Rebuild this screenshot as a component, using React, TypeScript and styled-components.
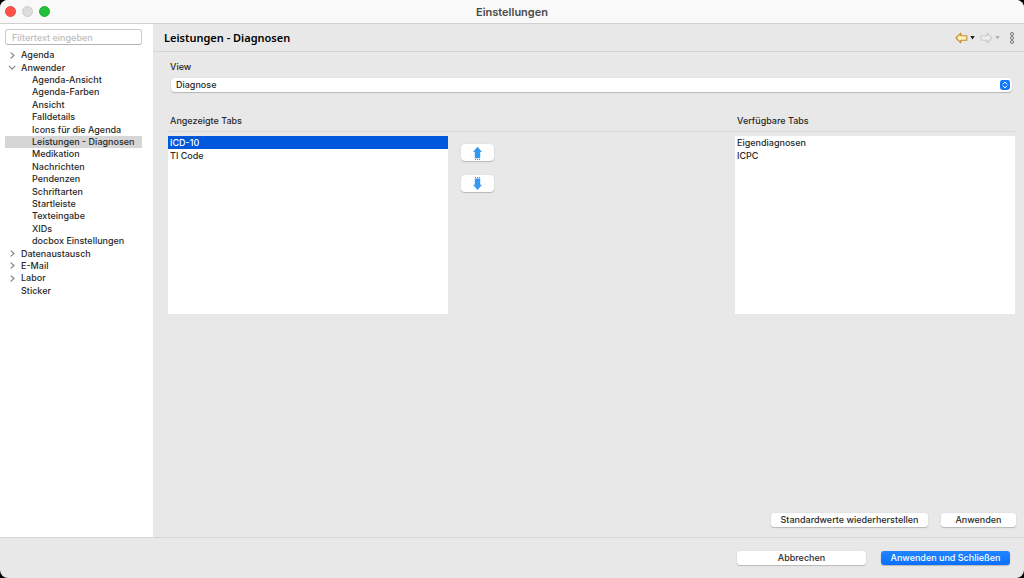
import React, { useState } from "react";
import styled, { createGlobalStyle, css } from "styled-components";

const GlobalStyle = createGlobalStyle`
  * { box-sizing: border-box; }
  body {
    margin: 0;
    background: #000;
    font: 500 9px/12px Inter, "Liberation Sans", sans-serif;
    color: #2a2a2a;
  }
  button, input, select { font: inherit; color: inherit; margin: 0; }
`;

const Window = styled.div`
  display: flex;
  flex-direction: column;
  min-height: 100vh;
  background: #e8e8e8;
  border-radius: 8px;
  overflow: hidden;
`;

const TitleBar = styled.header`
  display: grid;
  grid-template-columns: 1fr auto 1fr;
  align-items: center;
  height: 24px;
  padding: 0 5px;
  background: #f9f9f9;
  border-bottom: 1px solid #cfcfcf;
`;

const TrafficLights = styled.div`
  display: flex;
  gap: 6px;
`;

const Light = styled.button<{ $fill: string; $edge: string }>`
  width: 11px;
  height: 11px;
  padding: 0;
  border: 1px solid ${(p) => p.$edge};
  border-radius: 50%;
  background: ${(p) => p.$fill};
`;

const WindowTitle = styled.h1`
  margin: 0;
  font-size: 11px;
  line-height: 14px;
  font-weight: 600;
  color: #4a4a4a;
`;

const Body = styled.div`
  display: flex;
  flex: 1;
`;

const Sidebar = styled.nav`
  width: 153px;
  padding: 5px 11px 0 5px;
  background: #fff;
`;

const FilterInput = styled.input`
  display: block;
  width: 100%;
  height: 16px;
  padding: 0 6px;
  border: 1px solid #cbcbcb;
  border-bottom-color: #b4b4b4;
  border-radius: 3px;
  background: #fff;
  &::placeholder { color: #bdbdbd; opacity: 1; }
`;

const Tree = styled.ul`
  display: grid;
  grid-template-rows: repeat(20, 1fr);
  height: 248px;
  margin: 4px 0 0;
  padding: 0;
  list-style: none;
`;

const TreeItem = styled.li<{ $level: number; $selected: boolean }>`
  display: flex;
  align-items: center;
  padding-left: ${(p) => (p.$level === 2 ? 11 : 0)}px;
  white-space: nowrap;
  background: ${(p) => (p.$selected ? "#d6d6d6" : "transparent")};
`;

const Twisty = styled.span`
  display: flex;
  width: 16px;
  padding-left: 3px;
`;

const Main = styled.main`
  display: flex;
  flex-direction: column;
  flex: 1;
  min-width: 0;
`;

const PageHeader = styled.div`
  display: flex;
  align-items: center;
  justify-content: space-between;
  height: 28px;
  padding: 0 8px 0 11px;
  border-bottom: 1px solid #d4d4d4;
`;

const PageTitle = styled.h2`
  margin: 0;
  font: 600 11px/14px "Noto Sans", "Open Sans", sans-serif;
  color: #000;
`;

const HeaderTools = styled.div`
  display: flex;
  align-items: center;
`;

const ToolButton = styled.button<{ $gap?: number }>`
  display: flex;
  padding: 0;
  margin-right: ${(p) => p.$gap ?? 0}px;
  border: 0;
  background: none;
`;

const Content = styled.div`
  display: flex;
  flex-direction: column;
  flex: 1;
  padding: 9px 8px 9px 15px;
`;

const FieldLabel = styled.label`
  padding-left: 2px;
`;

const SelectFrame = styled.div`
  display: grid;
  align-items: center;
  margin: 5px 4px 0 3px;
  border-radius: 4px;
  background: #fff;
  box-shadow: 0 1px 1px #b4b4b4, 0 0 1px #c4c4c4;
`;

const Select = styled.select`
  grid-area: 1 / 1;
  width: 100%;
  height: 14px;
  padding: 0 20px 0 5px;
  border: 0;
  border-radius: 4px;
  background: transparent;
  appearance: none;
`;

const SelectKnob = styled.span`
  grid-area: 1 / 1;
  justify-self: end;
  display: flex;
  margin-right: 2px;
  pointer-events: none;
`;

const Columns = styled.div`
  display: grid;
  grid-template-columns: 280px 1fr 280px;
  margin-top: 23px;
  padding-right: 1px;
`;

const ColumnTitle = styled.h3<{ $span?: number }>`
  grid-column: span ${(p) => p.$span ?? 1};
  height: 17px;
  margin: 0 0 4px;
  padding-left: 2px;
  border-bottom: 1px solid #d6d6d6;
  font-size: 9px;
  line-height: 12px;
  font-weight: 500;
`;

const ListBox = styled.ul`
  height: 178px;
  margin: 0;
  padding: 0;
  list-style: none;
  background: #fff;
`;

const ListItem = styled.li<{ $selected?: boolean }>`
  padding-left: 2px;
  line-height: 13px;
  ${(p) => p.$selected && css`
    background: #0058dc;
    color: #fff;
  `}
`;

const MoveButtons = styled.div`
  display: flex;
  flex-direction: column;
  gap: 14px;
  padding: 8px 13px;
`;

const Button = styled.button<{ $width: number; $primary?: boolean; $tall?: boolean }>`
  display: flex;
  align-items: center;
  justify-content: center;
  width: ${(p) => p.$width}px;
  height: ${(p) => (p.$tall ? 17 : 14)}px;
  padding: 0;
  border: 0;
  border-radius: ${(p) => (p.$tall ? 4 : 3)}px;
  white-space: nowrap;
  background: ${(p) => (p.$primary ? "linear-gradient(#2385ff, #0a70fb)" : "#fff")};
  color: ${(p) => (p.$primary ? "#fff" : "#2a2a2a")};
  box-shadow: 0 1px 1px #b8b8b8, 0 0 1px #c4c4c4;
`;

const PageActions = styled.div`
  display: flex;
  justify-content: flex-end;
  gap: 13px;
  margin-top: auto;
  padding-bottom: 1px;
`;

const Footer = styled.footer`
  display: flex;
  justify-content: flex-end;
  gap: 15px;
  height: 41px;
  padding: 13px 14px 0;
  border-top: 1px solid #d6d6d6;
`;

type Node = { label: string; level: number; open?: boolean };

const nodes: Node[] = [
  { label: "Agenda", level: 1, open: false },
  { label: "Anwender", level: 1, open: true },
  { label: "Agenda-Ansicht", level: 2 },
  { label: "Agenda-Farben", level: 2 },
  { label: "Ansicht", level: 2 },
  { label: "Falldetails", level: 2 },
  { label: "Icons für die Agenda", level: 2 },
  { label: "Leistungen - Diagnosen", level: 2 },
  { label: "Medikation", level: 2 },
  { label: "Nachrichten", level: 2 },
  { label: "Pendenzen", level: 2 },
  { label: "Schriftarten", level: 2 },
  { label: "Startleiste", level: 2 },
  { label: "Texteingabe", level: 2 },
  { label: "XIDs", level: 2 },
  { label: "docbox Einstellungen", level: 2 },
  { label: "Datenaustausch", level: 1, open: false },
  { label: "E-Mail", level: 1, open: false },
  { label: "Labor", level: 1, open: false },
  { label: "Sticker", level: 1 },
];

const Chevron = ({ open }: { open: boolean }) => (
  <svg width="9" height="9" viewBox="0 0 9 9" fill="none" stroke="#808080" strokeWidth="1.1" strokeLinecap="round" strokeLinejoin="round">
    <path d={open ? "M1.2 3.2 4.1 6.1 7 3.2" : "M3 1.8 6 4.5 3 7.2"} />
  </svg>
);

const HistoryArrow = ({ forward }: { forward?: boolean }) => (
  <svg width="13" height="12" viewBox="0 0 13 12" strokeLinejoin="round">
    <path
      d={forward ? "M12 6 7.2 1.2V3.8H1.2V8.2H7.2V10.8Z" : "M1 6 5.8 1.2V3.8H11.8V8.2H5.8V10.8Z"}
      fill={forward ? "#ededed" : "#fff3bd"}
      stroke={forward ? "#cacaca" : "#c48a2c"}
      strokeWidth="1.1"
    />
  </svg>
);

const Caret = ({ color }: { color: string }) => (
  <svg width="5" height="5" viewBox="0 0 5 5">
    <path d="M.3 1h4.4L2.5 4.5Z" fill={color} />
  </svg>
);

const MenuDots = () => (
  <svg width="8" height="12" viewBox="0 0 8 12" fill="#f2f2f2" stroke="#666" strokeWidth=".9">
    <circle cx="4" cy="2" r="1.5" />
    <circle cx="4" cy="6" r="1.5" />
    <circle cx="4" cy="10" r="1.5" />
  </svg>
);

const Knob = () => (
  <svg width="10" height="10" viewBox="0 0 10 10" fill="none">
    <rect width="10" height="10" rx="2.4" fill="#1478fb" />
    <path d="M3 4 5 2.1 7 4M3 6 5 7.9 7 6" stroke="#fff" strokeWidth="1" strokeLinecap="round" strokeLinejoin="round" />
  </svg>
);

const MoveArrow = ({ down }: { down?: boolean }) => (
  <svg width="10" height="14" viewBox="0 0 10 14" fill="#3399f3">
    {down ? (
      <path d="M2 0h1v1h-1zM4 0h1v1h-1zM6 0h1v1h-1zM1.8 1.6h5.4v6.2H9L4.5 13 0 7.8H1.8Z" />
    ) : (
      <path d="M4.5 .8 9 6H7.2V12.2H1.8V6H0ZM2 13h1v1h-1zM4 13h1v1h-1zM6 13h1v1h-1z" />
    )}
  </svg>
);

export default function App() {
  const [selected, setSelected] = useState("Leistungen - Diagnosen");

  return (
    <>
      <GlobalStyle />
      <Window>
        <TitleBar>
          <TrafficLights>
            <Light $fill="#ff5049" $edge="#ea4a43" aria-label="Schließen" />
            <Light $fill="#dcdcdc" $edge="#cccccc" aria-label="Minimieren" />
            <Light $fill="#23c138" $edge="#1fb133" aria-label="Vergrößern" />
          </TrafficLights>
          <WindowTitle>Einstellungen</WindowTitle>
        </TitleBar>
        <Body>
          <Sidebar>
            <FilterInput type="text" placeholder="Filtertext eingeben" aria-label="Filtertext eingeben" />
            <Tree role="tree">
              {nodes.map((n) => (
                <TreeItem
                  key={n.label}
                  role="treeitem"
                  aria-level={n.level}
                  aria-expanded={n.open}
                  aria-selected={n.label === selected}
                  $level={n.level}
                  $selected={n.label === selected}
                  onClick={() => setSelected(n.label)}
                >
                  <Twisty>{n.open !== undefined && <Chevron open={n.open} />}</Twisty>
                  {n.label}
                </TreeItem>
              ))}
            </Tree>
          </Sidebar>
          <Main>
            <PageHeader>
              <PageTitle>Leistungen - Diagnosen</PageTitle>
              <HeaderTools>
                <ToolButton aria-label="Zurück" $gap={2}><HistoryArrow /></ToolButton>
                <ToolButton aria-label="Verlauf zurück" $gap={5}><Caret color="#1a1a1a" /></ToolButton>
                <ToolButton aria-label="Vor" $gap={2} disabled><HistoryArrow forward /></ToolButton>
                <ToolButton aria-label="Verlauf vor" $gap={8} disabled><Caret color="#b0b0b0" /></ToolButton>
                <ToolButton aria-label="Menü"><MenuDots /></ToolButton>
              </HeaderTools>
            </PageHeader>
            <Content>
              <FieldLabel htmlFor="view">View</FieldLabel>
              <SelectFrame>
                <Select id="view" defaultValue="Diagnose">
                  <option>Diagnose</option>
                </Select>
                <SelectKnob><Knob /></SelectKnob>
              </SelectFrame>
              <Columns>
                <ColumnTitle $span={2}>Angezeigte Tabs</ColumnTitle>
                <ColumnTitle>Verfügbare Tabs</ColumnTitle>
                <ListBox>
                  <ListItem $selected>ICD-10</ListItem>
                  <ListItem>TI Code</ListItem>
                </ListBox>
                <MoveButtons>
                  <Button $width={33} $tall aria-label="Nach oben"><MoveArrow /></Button>
                  <Button $width={33} $tall aria-label="Nach unten"><MoveArrow down /></Button>
                </MoveButtons>
                <ListBox>
                  <ListItem>Eigendiagnosen</ListItem>
                  <ListItem>ICPC</ListItem>
                </ListBox>
              </Columns>
              <PageActions>
                <Button $width={157}>Standardwerte wiederherstellen</Button>
                <Button $width={75}>Anwenden</Button>
              </PageActions>
            </Content>
          </Main>
        </Body>
        <Footer>
          <Button $width={129}>Abbrechen</Button>
          <Button $width={129} $primary>Anwenden und Schließen</Button>
        </Footer>
      </Window>
    </>
  );
}
